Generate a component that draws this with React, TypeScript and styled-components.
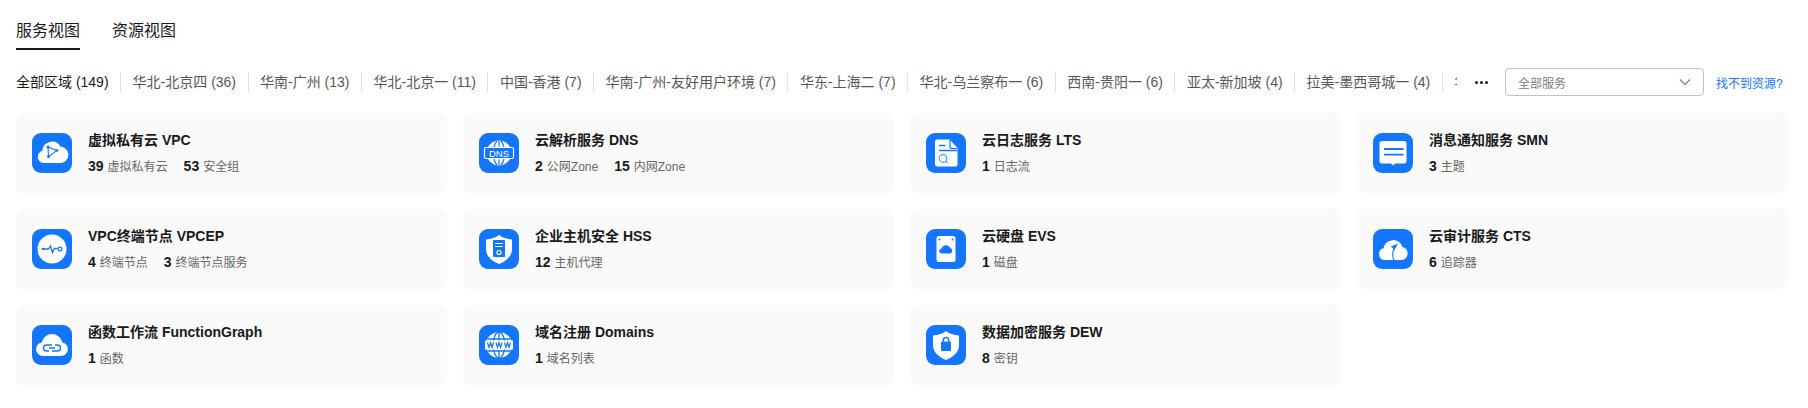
import React from "react";
import styled, { createGlobalStyle } from "styled-components";

const Global = createGlobalStyle`
  html, body { margin: 0; padding: 0; background: #fff; }
  body { font-family: "Liberation Sans", "Noto Sans CJK SC", sans-serif; color: #191919; }
`;

const Page = styled.div`
  width: 1808px;
  height: 408px;
  overflow: hidden;
  padding: 16px 20px 0 16px;
  box-sizing: border-box;
`;

const Tabs = styled.div`
  display: flex;
  gap: 32px;
  height: 35px;
`;

const Tab = styled.div<{ $active?: boolean }>`
  font-size: 16px;
  line-height: 29px;
  height: 32px;
  color: #191919;
  border-bottom: ${(p) => (p.$active ? "2px solid #191919" : "2px solid transparent")};
`;

const FilterRow = styled.div`
  display: flex;
  align-items: center;
  margin-top: 17px;
  height: 28px;
`;

const Regions = styled.div`
  width: 1441px;
  display: flex;
  align-items: center;
  overflow: hidden;
  flex: none;
`;

const Region = styled.div<{ $active?: boolean }>`
  flex: none;
  font-size: 14px;
  line-height: 20px;
  white-space: nowrap;
  color: ${(p) => (p.$active ? "#191919" : "#575757")};
  padding: 0 11.5px;
  border-left: 1px solid #dfdfdf;
  &:first-child {
    padding-left: 0;
    border-left: none;
  }
`;

const More = styled.div`
  flex: none;
  width: 48px;
  display: flex;
  justify-content: center;
  gap: 2px;
  & i {
    width: 3px;
    height: 3px;
    border-radius: 50%;
    background: #191919;
  }
`;

const Select = styled.div`
  flex: none;
  width: 199px;
  height: 28px;
  box-sizing: border-box;
  border: 1px solid #c1c1c1;
  border-radius: 4px;
  padding: 0 12px;
  display: flex;
  align-items: center;
  justify-content: space-between;
  font-size: 12px;
  color: #808080;
`;

const Help = styled.a`
  flex: none;
  margin-left: 12px;
  font-size: 12px;
  color: #1476ff;
  white-space: nowrap;
`;

const Grid = styled.div`
  display: grid;
  grid-template-columns: repeat(4, 1fr);
  gap: 16px;
  margin-top: 17px;
`;

const Card = styled.div`
  height: 80px;
  background: #fafafa;
  border-radius: 8px;
  padding: 20px 16px;
  box-sizing: border-box;
  display: flex;
  gap: 16px;
`;

const IconBox = styled.svg`
  flex: none;
  width: 40px;
  height: 40px;
  display: block;
`;

const Info = styled.div`
  display: flex;
  flex-direction: column;
  justify-content: space-between;
  height: 45px;
  margin-top: -2px;
`;

const Title = styled.div`
  font-size: 14px;
  line-height: 18px;
  font-weight: 700;
  color: #191919;
  white-space: nowrap;
`;

const Stats = styled.div`
  display: flex;
  gap: 16px;
  line-height: 18px;
`;

const Stat = styled.div`
  display: flex;
  align-items: baseline;
  gap: 4px;
  font-size: 12px;
  color: #666;
`;

const Count = styled.span`
  font-size: 14px;
  font-weight: 700;
  color: #191919;
`;

const B = "#1476ff";
const W = "#fff";

const icons: Record<string, React.ReactNode> = {
  vpc: (
    <>
      <path fill={W} d="M12 30a6.200 6.200 0 0 1-1.600-12.200A9.600 9.600 0 0 1 28.400 13.600 8.200 8.200 0 0 1 28 30z" />
      <path fill="none" stroke={B} strokeWidth="1.100" d="M16 14l9 3.500-8.500 6z" />
      <circle cx="16" cy="14" r="1.500" fill={B} />
      <circle cx="25" cy="17.500" r="1.300" fill={B} />
      <circle cx="16.500" cy="23.500" r="1.500" fill={B} />
    </>
  ),
  dns: (
    <>
      <circle cx="20" cy="20" r="12.500" fill={W} />
      <path fill="none" stroke={B} strokeWidth="1.200" d="M20 7.500v6M20 26.500v6M8.500 14.500h23M8.500 25.500h23M15 26c.6 2.500 1.600 4.500 3 6M25 26c-.6 2.500-1.600 4.500-3 6M15 14c.6-2.500 1.600-4.500 3-6M25 14c-.6-2.500-1.600-4.500-3-6" />
      <rect x="5.500" y="14.500" width="29" height="11" rx="1.500" fill={B} stroke={W} strokeWidth="1.200" />
      <text x="20" y="23.500" textAnchor="middle" fontSize="9.500" fill={W} fontFamily="Liberation Sans, sans-serif">DNS</text>
    </>
  ),
  lts: (
    <>
      <path fill={W} d="M11 6.500h12.500l8 8.500v16.500a2 2 0 0 1-2 2H11a2 2 0 0 1-2-2v-23a2 2 0 0 1 2-2z" />
      <path fill="none" stroke={B} strokeWidth="1.200" d="M24 7v6.500a2 2 0 0 0 2 2h5" />
      <path fill="none" stroke={B} strokeWidth="1.300" d="M13 12.500h6.500M13 17.500h18" />
      <circle cx="17" cy="25.500" r="3.800" fill="none" stroke="#4a94ff" strokeWidth="1.200" />
      <path stroke="#4a94ff" strokeWidth="1.200" d="M19.700 28.200l2 2" />
    </>
  ),
  smn: (
    <>
      <path fill={W} d="M9 8h22a2.500 2.500 0 0 1 2.500 2.500v17.500a2.500 2.500 0 0 1-2.500 2.500h-9l-2 2-2-2H9a2.500 2.500 0 0 1-2.500-2.500V10.500A2.500 2.500 0 0 1 9 8z" />
      <path stroke={B} strokeWidth="1.800" d="M11 16h19.500M11 21.700h19.500" />
    </>
  ),
  vpcep: (
    <>
      <circle cx="20" cy="20" r="14.500" fill={W} />
      <path fill="none" stroke={B} strokeWidth="1.300" d="M11 20h5.500l2-3 2 6.500 2-4h3" />
      <circle cx="11" cy="20" r="1.300" fill={B} />
      <circle cx="28" cy="20" r="1.900" fill="none" stroke={B} strokeWidth="1.200" />
    </>
  ),
  hss: (
    <>
      <path fill={W} d="M20 6c3 2.500 8 4 13 4.500V20c0 7-5 11.500-13 15C12 31.500 7 27 7 20v-9.500C12 10 17 8.500 20 6z" />
      <rect x="14" y="11" width="12" height="17" rx="1" fill={B} />
      <path stroke={W} strokeWidth="1.100" d="M16 14.500h8M16 17.500h8" />
      <circle cx="20" cy="23.500" r="2" fill="none" stroke={W} strokeWidth="1.200" />
    </>
  ),
  evs: (
    <>
      <rect x="10.500" y="7" width="19" height="26" rx="2.500" fill={W} />
      <circle cx="13.500" cy="10.500" r="1" fill={B} />
      <circle cx="26.500" cy="10.500" r="1" fill={B} />
      <path fill={B} d="M16 24.500a2.500 2.500 0 0 1-.4-5 4.600 4.600 0 0 1 8.700-.4 2.800 2.800 0 0 1 0 5.400z" />
    </>
  ),
  cts: (
    <>
      <path fill={W} d="M12 31a6 6 0 0 1-1.500-11.800A9.800 9.800 0 0 1 29.500 18 6.600 6.600 0 0 1 28.500 31z" />
      <path fill={B} d="M25 14.500l-7.500 3.300 2.600 1.100 1.100 2.600z" />
      <path fill="none" stroke={B} strokeWidth="1.100" d="M20.800 19.500c-1.300 3.500-1.300 8 0 11.500" />
    </>
  ),
  fg: (
    <>
      <path fill={W} d="M11 31a6.800 6.800 0 0 1-1.300-13.500A10.500 10.500 0 0 1 30.300 17.500 6.800 6.800 0 0 1 29 31z" />
      <path fill="none" stroke={B} strokeWidth="1.400" d="M20 20h-5.500a3 3 0 0 0 0 6h2.500M20 26h5.500a3 3 0 0 0 0-6h-2.500M17 23h6" />
    </>
  ),
  domains: (
    <>
      <circle cx="20" cy="20" r="13" fill={W} />
      <g fill="none" stroke={B} strokeWidth="1.300">
        <ellipse cx="20" cy="20" rx="5.800" ry="13" />
        <path d="M20 7v8M20 25v8M8.500 14h23M8.500 26h23" />
      </g>
      <rect x="6" y="15.500" width="28" height="9" fill={W} />
      <path fill="none" stroke={B} strokeWidth="1.200" d="M8.500 17.500l1.500 5 1.500-5 1.500 5 1.500-5M17 17.500l1.500 5 1.500-5 1.500 5 1.500-5M25.500 17.500l1.500 5 1.500-5 1.500 5 1.500-5" />
    </>
  ),
  dew: (
    <>
      <path fill={W} d="M20 6c3 2.500 8 4 13 4.500V20c0 7-5 11.500-13 15C12 31.500 7 27 7 20v-9.500C12 10 17 8.500 20 6z" />
      <rect x="15" y="16.500" width="10" height="9.500" rx="1.200" fill={B} />
      <path fill="none" stroke={B} strokeWidth="1.400" d="M17.300 17v-1.800a2.700 2.700 0 0 1 5.400 0V17" />
    </>
  ),
};

const regions = [
  "全部区域 (149)",
  "华北-北京四 (36)",
  "华南-广州 (13)",
  "华北-北京一 (11)",
  "中国-香港 (7)",
  "华南-广州-友好用户环境 (7)",
  "华东-上海二 (7)",
  "华北-乌兰察布一 (6)",
  "西南-贵阳一 (6)",
  "亚太-新加坡 (4)",
  "拉美-墨西哥城一 (4)",
  "华东-上海一 (3)",
];

const services: { icon: string; title: string; stats: [number, string][] }[] = [
  { icon: "vpc", title: "虚拟私有云 VPC", stats: [[39, "虚拟私有云"], [53, "安全组"]] },
  { icon: "dns", title: "云解析服务 DNS", stats: [[2, "公网Zone"], [15, "内网Zone"]] },
  { icon: "lts", title: "云日志服务 LTS", stats: [[1, "日志流"]] },
  { icon: "smn", title: "消息通知服务 SMN", stats: [[3, "主题"]] },
  { icon: "vpcep", title: "VPC终端节点 VPCEP", stats: [[4, "终端节点"], [3, "终端节点服务"]] },
  { icon: "hss", title: "企业主机安全 HSS", stats: [[12, "主机代理"]] },
  { icon: "evs", title: "云硬盘 EVS", stats: [[1, "磁盘"]] },
  { icon: "cts", title: "云审计服务 CTS", stats: [[6, "追踪器"]] },
  { icon: "fg", title: "函数工作流 FunctionGraph", stats: [[1, "函数"]] },
  { icon: "domains", title: "域名注册 Domains", stats: [[1, "域名列表"]] },
  { icon: "dew", title: "数据加密服务 DEW", stats: [[8, "密钥"]] },
];

export default function App() {
  return (
    <Page>
      <Global />
      <Tabs>
        <Tab $active>服务视图</Tab>
        <Tab>资源视图</Tab>
      </Tabs>
      <FilterRow>
        <Regions>
          {regions.map((r, i) => (
            <Region key={r} $active={i === 0}>{r}</Region>
          ))}
        </Regions>
        <More><i /><i /><i /></More>
        <Select>
          全部服务
          <svg width="12" height="12" viewBox="0 0 12 12" fill="none" stroke="#808080" strokeWidth="1.200">
            <path d="M1 3.500l5 5 5-5" />
          </svg>
        </Select>
        <Help>找不到资源?</Help>
      </FilterRow>
      <Grid>
        {services.map((s) => (
          <Card key={s.title}>
            <IconBox viewBox="0 0 40 40">
              <rect width="40" height="40" rx="9" fill={B} />
              {icons[s.icon]}
            </IconBox>
            <Info>
              <Title>{s.title}</Title>
              <Stats>
                {s.stats.map(([n, l]) => (
                  <Stat key={l}>
                    <Count>{n}</Count>
                    {l}
                  </Stat>
                ))}
              </Stats>
            </Info>
          </Card>
        ))}
      </Grid>
    </Page>
  );
}
